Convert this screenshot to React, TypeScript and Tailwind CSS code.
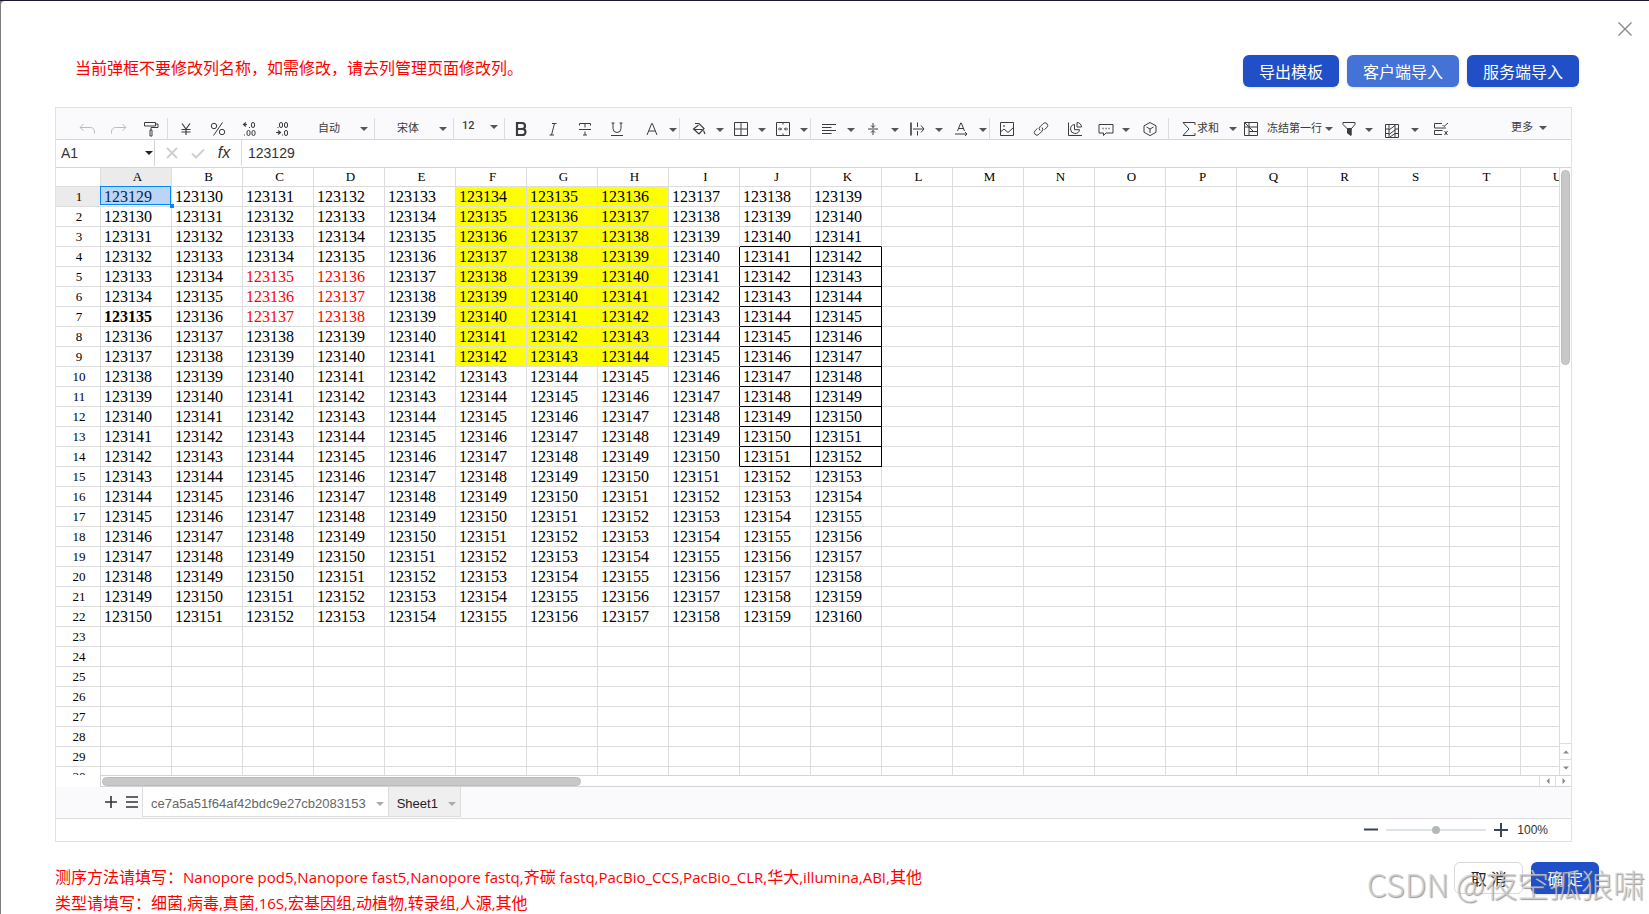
import React from "react";
import clsx from "clsx";

const COLUMNS = "ABCDEFGHIJKLMNOPQRSTUVWXYZ".split("");
const ROWS = Array.from({ length: 30 }, (_, i) => i + 1);
const DATA_ROWS = 22;
const DATA_COLUMNS = 11;

const Icon = ({ children, className = "" }) => (
  <svg
    viewBox="0 0 16 16"
    className={clsx("h-4 w-4 shrink-0", className)}
    fill="none"
    stroke="currentColor"
    strokeWidth="1"
    aria-hidden="true"
  >
    {children}
  </svg>
);

const Arrow = ({ className = "text-[#555]" }) => (
  <svg viewBox="0 0 8 4" className={clsx("h-1 w-2 shrink-0", className)} fill="currentColor" aria-hidden="true">
    <path d="M0 0h8L4 4z" />
  </svg>
);

const Tool = ({ label, children, className = "w-8" }) => (
  <button type="button" aria-label={label} className={clsx("flex h-full items-center justify-center", className)}>
    {children}
  </button>
);

const DropTool = ({ label, children, className = "w-8" }) => (
  <div className="flex h-full">
    <Tool label={label} className={className}>
      {children}
    </Tool>
    <button type="button" aria-label={`${label}选项`} className="flex h-full w-3 items-center justify-center pt-0.5">
      <Arrow />
    </button>
  </div>
);

const Combo = ({ label, className }) => (
  <button type="button" className={clsx("flex h-full items-center justify-between text-[11px]", className)}>
    <span className="whitespace-nowrap">{label}</span>
    <Arrow />
  </button>
);

const Group = ({ children, className = "" }) => (
  <div className={clsx("flex h-full shrink-0 border-r border-[#ddd]", className)}>{children}</div>
);

const Toolbar = () => (
  <div className="flex h-8 overflow-hidden border-b border-[#d4d4d4] bg-[#fafafc] pt-2.5 text-[#3c3c3c]">
    <Group className="pl-[15px]">
      <Tool label="撤销">
        <Icon className="text-[#bbb]">
          <path d="M4.500 3L1 6.500 4.500 9.500M1 6.500h10.500c2.500 0 4 1.800 4 4.500v1.500" />
        </Icon>
      </Tool>
      <Tool label="重做">
        <Icon className="text-[#bbb]">
          <path d="M11.500 3L15 6.500 11.500 9.500M15 6.500H4.500C2 6.500.5 8.300.5 11v1.500" />
        </Icon>
      </Tool>
      <Tool label="格式刷">
        <Icon>
          <path d="M1.500 1.500h11v3.500h-11zM12.500 3h2.500v3.500H8v2.500" />
          <path d="M7 9h2v6H7z" />
        </Icon>
      </Tool>
    </Group>
    <Group className="pl-0.5">
      <Tool label="货币格式">
        <Icon>
          <path d="M4 2.500l4 5.500 4-5.500M8 8v6M3.500 8.500h9M3.500 11h9" strokeWidth="1.200" />
        </Icon>
      </Tool>
      <Tool label="百分比格式">
        <Icon>
          <circle cx="4" cy="5" r="2.700" />
          <circle cx="12" cy="11" r="2.700" />
          <path d="M12.500 1.500l-9 13" />
        </Icon>
      </Tool>
      <Tool label="减少小数位数">
        <Icon>
          <path d="M4 1.500L1.500 3.500 4 5.500M1.500 3.500H5M7 6.500h1M2 14h1" strokeWidth="1.200" />
          <rect x="9.500" y="1.500" width="3" height="5" rx="1.500" />
          <rect x="5" y="9.500" width="3" height="5" rx="1.500" />
          <rect x="10" y="9.500" width="3" height="5" rx="1.500" />
        </Icon>
      </Tool>
      <Tool label="增加小数位数">
        <Icon>
          <path d="M4 9.500l2.500 2-2.500 2M2 11.500h4.500M8 14h1M3.500 6.500h1" strokeWidth="1.200" />
          <rect x="5.500" y="1.500" width="3" height="5" rx="1.500" />
          <rect x="10.500" y="1.500" width="3" height="5" rx="1.500" />
          <rect x="10.500" y="9.500" width="3" height="5" rx="1.500" />
        </Icon>
      </Tool>
      <Combo label="自动" className="ml-5 mr-1.5 w-[50px]" />
    </Group>
    <Group>
      <Combo label="宋体" className="ml-[22px] mr-1.5 w-[50px]" />
    </Group>
    <Group>
      <Combo label="12" className="ml-2 mr-1.5 w-9 pb-1 font-[Roboto] font-medium" />
    </Group>
    <Group>
      <Tool label="加粗">
        <Icon>
          <path d="M4 2h5a2.900 2.900 0 0 1 0 6H4zM4 8h5.500a3 3 0 0 1 0 6H4z" strokeWidth="2.200" />
        </Icon>
      </Tool>
      <Tool label="斜体">
        <Icon>
          <path d="M7 2.500h4.500M4.500 14h4.500M9.500 2.500L6.500 14" />
        </Icon>
      </Tool>
      <Tool label="删除线">
        <Icon>
          <path d="M2.500 4.500v-2h11v2M2 8.500h12M8 2.500v4M8 10.500V14M6 14h4" />
        </Icon>
      </Tool>
      <Tool label="下划线">
        <Icon>
          <path d="M2.500 2h3M10.500 2h3M4 2v5.500a4 4 0 0 0 8 0V2M2 14.500h12" />
        </Icon>
      </Tool>
      <div className="ml-1">
        <DropTool label="文本颜色" className="h-full w-[30px]">
          <Icon>
            <path d="M3 14L7.700 2.500h.6L13 14M4.500 10h7" />
          </Icon>
        </DropTool>
      </div>
    </Group>
    <Group className="pl-1">
      <DropTool label="单元格颜色" className="w-[30px]">
        <Icon>
          <path d="M4 2.500h4l5 5-5 5.500-5.500-5L7.500 4M3 8.500h8M12.500 9.500l1.500 3.500" strokeWidth="1.200" />
        </Icon>
      </DropTool>
      <DropTool label="边框" className="w-[30px]">
        <Icon>
          <path d="M1.500 1.500h13v13h-13zM8 1.500v13M1.500 8h13" />
        </Icon>
      </DropTool>
      <DropTool label="合并单元格" className="w-[30px]">
        <Icon>
          <path d="M1.500 1.500h13v13h-13zM8 1.500v2M8 12.500v2" />
          <path d="M3 8h3.500M5 6.500L6.500 8 5 9.500M13 8H9.500M11 6.500L9.500 8 11 9.500" />
        </Icon>
      </DropTool>
    </Group>
    <Group className="pl-0.5">
      <DropTool label="水平对齐">
        <Icon>
          <path d="M1 3.500h14M1 6.500h9.500M1 9.500h14M1 12.500h9.500" strokeWidth="1.200" />
        </Icon>
      </DropTool>
      <DropTool label="垂直对齐">
        <Icon>
          <path d="M3 8h10M8 2v4.500M6 4.500l2 2 2-2M8 14V9.500M6 11.500l2-2 2 2" />
        </Icon>
      </DropTool>
      <DropTool label="文本换行">
        <Icon>
          <path d="M2 1.500v13" strokeWidth="1.600" />
          <path d="M8.500 1.500v4.500M8.500 10v4.500M4 8h11M12 4.500L15 8l-3 3.500" />
        </Icon>
      </DropTool>
      <DropTool label="文本旋转">
        <Icon>
          <path d="M4.500 10L7.700 2h.6l3.200 8M5.500 7.500h5M2 13h12M12 11l2 2-2 2" />
        </Icon>
      </DropTool>
    </Group>
    <Group>
      <Tool label="插入图片" className="w-[34px]">
        <Icon>
          <path d="M1.500 1.500h13v13h-13zM1.500 11l3.500-3 4 3.500 5.500-5" />
          <circle cx="5" cy="5" r="0.500" />
        </Icon>
      </Tool>
      <Tool label="插入链接" className="w-[34px]">
        <Icon>
          <path d="M7 9.500a2.600 2.600 0 0 1 0-3.700l3.200-3.200a2.600 2.600 0 0 1 3.700 3.700L11.500 8.700" />
          <path d="M9 6.500a2.600 2.600 0 0 1 0 3.700l-3.200 3.200a2.600 2.600 0 0 1-3.700-3.700l2.400-2.400" />
        </Icon>
      </Tool>
      <Tool label="图表" className="w-[34px]">
        <Icon>
          <path d="M1.500 1.500v13H15M7.500 3.500a4.500 4.500 0 1 0 5 5.200h-5zM10 1.500v4.500h4.500A4.500 4.500 0 0 0 10 1.500z" />
        </Icon>
      </Tool>
      <DropTool label="批注" className="w-7">
        <Icon>
          <path d="M1 3.500h14v8.500H8l-2.500 2.500V12H1z" />
          <path d="M4.500 7.500h1M7.500 7.500h1M10.500 7.500h1" strokeWidth="1.300" />
        </Icon>
      </DropTool>
      <Tool label="数据透视表" className="w-9">
        <Icon>
          <path d="M8 1.500l6 3.300v6.500l-6 3.300-6-3.300V4.800zM8 8v4M8 8L4.500 6M8 8l3.500-2" />
        </Icon>
      </Tool>
    </Group>
    <div className="flex h-full shrink-0 pl-3">
      <button type="button" className="flex h-full w-[46px] items-center text-[11px]">
        <Icon>
          <path d="M14 4V1.500H2L8 8l-6 6.500h12V12" />
        </Icon>
        <span className="whitespace-nowrap">求和</span>
      </button>
      <button type="button" aria-label="求和选项" className="w-4 pl-0.5">
        <Arrow />
      </button>
      <button type="button" className="flex h-full w-20 items-center gap-2 text-[11px]">
        <Icon>
          <path d="M1.500 1.500h13v13h-13zM6 1.500v13M1.500 6h13M6 10.500h8.500M1.500 1.500L6 6M6 6l4.500 4.500" />
        </Icon>
        <span className="whitespace-nowrap">冻结第一行</span>
      </button>
      <button type="button" aria-label="冻结选项" className="w-3 pl-0.5">
        <Arrow />
      </button>
      <DropTool label="筛选" className="w-7">
        <Icon>
          <path d="M2 1.500h12v2L10 8v6.500L6.500 12V8L2 3.500z" />
          <path d="M6.500 7.500H10V14L6.500 12z" fill="currentColor" />
        </Icon>
      </DropTool>
      <DropTool label="条件格式" className="w-[34px] pt-1">
        <Icon>
          <path d="M1.500 1.500h13v13h-13zM5 1.500v13M11 1.500v13M1.500 6H5M1.500 10.500H5M11 6h3.500M11 10.500h3.500M5 7l6-4.500M5 11.500L11 7M6 14l5-3.500" />
        </Icon>
      </DropTool>
      <Tool label="数据验证" className="w-10">
        <Icon>
          <path d="M9 2.500H1.500v4.500H13M9.500 9.500h-8v4H9M9.500 4l1.500 1.500L15 2M11.500 10l3 4M14.500 10l-3 4" />
        </Icon>
      </Tool>
    </div>
    <Combo label="更多" className="ml-auto mr-6 w-9 pb-0.5" />
  </div>
);

const FormulaBar = () => (
  <div className="flex h-7 border-b border-[#d4d4d4] pb-px text-sm text-[#333]">
    <div className="flex w-[99px] items-center border-r border-[#d4d4d4] pl-[5px] pr-px">
      <input aria-label="名称框" defaultValue="A1" className="w-full min-w-0 outline-none" />
      <Arrow className="text-[#222]" />
    </div>
    <div className="flex w-[87px] items-center justify-center border-r border-[#ddd]">
      <Tool label="取消输入" className="w-[26px]">
        <Icon className="text-[#d0d0d0]">
          <path d="M3 3l10 10M13 3L3 13" strokeWidth="2" />
        </Icon>
      </Tool>
      <Tool label="确认输入" className="w-[26px]">
        <Icon className="text-[#d0d0d0]">
          <path d="M2 8.500l4 4 8-8" strokeWidth="2" />
        </Icon>
      </Tool>
      <Tool label="插入函数" className="w-[26px]">
        <span className="text-base leading-4 italic">fx</span>
      </Tool>
    </div>
    <input aria-label="编辑栏" defaultValue="123129" className="min-w-0 flex-1 pl-1.5 outline-none" />
  </div>
);

const cellClass = (row, col) => {
  const boxed = row >= 4 && row <= 14 && (col === 9 || col === 10);
  const boxTop = row === 3 && (col === 9 || col === 10);
  const boxLeft = row >= 4 && row <= 14 && col === 8;
  return clsx(
    "relative h-5 min-w-[71px] border-r border-b pl-[3px] text-base leading-[19px]",
    boxed || boxLeft ? "border-r-black" : "border-r-[#ddd]",
    boxed || boxTop ? "border-b-black" : "border-b-[#ddd]",
    row <= 9 && col >= 5 && col <= 7 && "bg-[#ffff00]",
    row >= 5 && row <= 7 && (col === 2 || col === 3) ? "text-[#ff0000]" : "text-black",
    row === 7 && col === 0 && "font-bold"
  );
};

const Grid = () => (
  <div className="h-[607px] min-w-0 flex-1 overflow-hidden">
    <table className="border-separate border-spacing-0 font-['Liberation_Serif',serif]">
      <thead>
        <tr>
          <td className="h-[19px] min-w-[45px] border-r border-b border-[#ddd]" />
          {COLUMNS.map((c, i) => (
            <th
              key={c}
              scope="col"
              className={clsx(
                "h-[19px] min-w-[71px] border-r border-b border-[#ddd] pl-[3px] text-[13px] leading-[18px] font-normal text-black",
                i === 0 && "bg-[#ebebeb]"
              )}
            >
              {c}
            </th>
          ))}
        </tr>
      </thead>
      <tbody>
        {ROWS.map((r) => (
          <tr key={r}>
            <th
              scope="row"
              className={clsx(
                "h-5 border-r border-b border-[#ddd] pl-0.5 text-[13px] leading-[19px] font-normal text-black",
                r === 1 && "bg-[#ebebeb]"
              )}
            >
              {r}
            </th>
            {COLUMNS.map((c, i) => (
              <td key={c} className={cellClass(r, i)}>
                {r <= DATA_ROWS && i < DATA_COLUMNS ? 123127 + r + i + 1 : ""}
                {r === 1 && i === 0 && (
                  <span className="absolute -top-px right-0 bottom-px -left-px z-10 border border-[#0188fb] bg-[#1a73e8]/30">
                    <span className="absolute -right-1 -bottom-1 h-1 w-1 bg-[#0188fb]" />
                  </span>
                )}
              </td>
            ))}
          </tr>
        ))}
      </tbody>
    </table>
  </div>
);

const ScrollArrow = ({ label, d, className }) => (
  <button type="button" aria-label={label} className={clsx("flex items-center justify-center border-[#ddd] text-[#888]", className)}>
    <svg viewBox="0 0 6 6" className="h-1.5 w-1.5" fill="currentColor" aria-hidden="true">
      <path d={d} />
    </svg>
  </button>
);

const Scrollbars = () => (
  <div className="flex h-3 pl-11">
    <div className="flex flex-1 border-t border-b border-l border-[#d4d4d4]">
      <div className="flex flex-1 items-center pl-px">
        <div className="h-[9px] w-1/3 rounded-full border border-[#bbb] bg-[#c8c8c8]" />
      </div>
      <ScrollArrow label="向左滚动" d="M4.500 0v6L1.500 3z" className="w-4 border-l" />
      <ScrollArrow label="向右滚动" d="M1.500 0v6l3-3z" className="w-4 border-l" />
    </div>
  </div>
);

const SheetTabs = () => (
  <div className="flex h-8 border-b border-[#ddd] bg-[#fafafc] pb-px pl-11 text-[13px]">
    <button type="button" aria-label="新增工作表" className="flex w-[21px] items-center justify-center text-[#333]">
      <Icon>
        <path d="M8 2v12M2 8h12" strokeWidth="1.600" />
      </Icon>
    </button>
    <button type="button" aria-label="工作表列表" className="flex w-[21px] items-center justify-center text-[#333]">
      <Icon>
        <path d="M2 3h12M2 8h12M2 13h12" strokeWidth="1.600" />
      </Icon>
    </button>
    <button type="button" className="flex items-center gap-2.5 border border-t-0 border-[#ddd] bg-white pt-1 pr-1 pl-2 text-[#666]">
      ce7a5a51f64af42bdc9e27cb2083153
      <Arrow className="text-[#aaa]" />
    </button>
    <button type="button" className="flex items-center gap-2.5 border border-t-0 border-l-0 border-[#ddd] bg-[#efefef] pt-1 pr-1 pl-2 text-[#222]">
      Sheet1
      <Arrow className="text-[#aaa]" />
    </button>
  </div>
);

const StatusBar = () => (
  <div className="flex h-[22px] items-center justify-end pr-[23px] text-xs text-[#3b4552]">
    <button type="button" aria-label="缩小">
      <Icon>
        <path d="M1 7.500h14" strokeWidth="2" />
      </Icon>
    </button>
    <input
      type="range"
      aria-label="缩放"
      min="0"
      max="100"
      defaultValue="50"
      className="mx-[7px] h-0.5 w-[100px] appearance-none bg-[#dfe4e9] [&::-webkit-slider-thumb]:h-2 [&::-webkit-slider-thumb]:w-2 [&::-webkit-slider-thumb]:appearance-none [&::-webkit-slider-thumb]:rounded-full [&::-webkit-slider-thumb]:bg-[#b2bab8]"
    />
    <button type="button" aria-label="放大">
      <Icon>
        <path d="M1 8h14M8 1v14" strokeWidth="2" />
      </Icon>
    </button>
    <span className="ml-2 text-[#333]">100%</span>
  </div>
);

const Spreadsheet = () => (
  <div className="mr-[77px] ml-[54px] border border-[#e2e2e2] bg-white font-['Liberation_Sans','Noto_Sans_CJK_SC',sans-serif]">
    <Toolbar />
    <FormulaBar />
    <div className="flex">
      <Grid />
      <div className="flex w-3 flex-col border-l border-[#ddd]">
        <div className="flex-1 px-px pt-0.5">
          <div className="h-[195px] w-[9px] rounded-full border border-[#bbb] bg-[#c8c8c8]" />
        </div>
        <ScrollArrow label="向上滚动" d="M0 4.500h6L3 1.500z" className="h-4 border-t" />
        <ScrollArrow label="向下滚动" d="M0 1.500h6l-3 3z" className="h-4 border-t" />
      </div>
    </div>
    <Scrollbars />
    <SheetTabs />
    <StatusBar />
  </div>
);

const En = ({ children }) => <span className="font-['Open_Sans',sans-serif] text-[15px]">{children}</span>;

const ImportButton = ({ children, className = "bg-[#204fc8]" }) => (
  <button type="button" className={clsx("h-8 rounded-md px-4 text-base leading-8 text-white shadow-sm", className)}>
    {children}
  </button>
);

export default function App() {
  return (
    <div
      lang="zh-CN"
      className="relative h-screen overflow-hidden border-t border-[#1a1932] bg-[#7f7f7f] pl-px font-['Noto_Sans_CJK_SC',sans-serif]"
    >
      <div className="relative h-full rounded-tl bg-white pt-[51px]">
        <button type="button" aria-label="关闭" className="absolute top-5 right-4 text-[#888]">
          <Icon>
            <path d="M1.500 1.500l13 13M14.500 1.500l-13 13" strokeWidth="1.400" />
          </Icon>
        </button>
        <div className="flex items-start justify-between pr-[70px] pb-5 pl-[74px]">
          <p className="text-base leading-[30px] text-[#ff0000]">当前弹框不要修改列名称，如需修改，请去列管理页面修改列。</p>
          <div className="flex gap-2 pt-[3px]">
            <ImportButton>导出模板</ImportButton>
            <ImportButton className="bg-[#4472d6]">客户端导入</ImportButton>
            <ImportButton>服务端导入</ImportButton>
          </div>
        </div>
        <Spreadsheet />
        <div className="flex items-start justify-between pt-5 pr-[50px] pl-[54px]">
          <div className="pt-0.5 text-base leading-[25px] text-[#ff0000]">
            <p>
              测序方法请填写：<En>Nanopore pod5,Nanopore fast5,Nanopore fastq,</En>齐碳<En> fastq,PacBio_CCS,PacBio_CLR,</En>
              华大<En>,illumina,ABI,</En>其他
            </p>
            <p>
              类型请填写：细菌<En>,</En>病毒<En>,</En>真菌<En>,16S,</En>宏基因组<En>,</En>动植物<En>,</En>转录组<En>,</En>人源
              <En>,</En>其他
            </p>
          </div>
          <div className="flex gap-2">
            <button type="button" className="h-8 rounded-md border border-[#d9d9d9] px-4 text-base leading-7 text-[#222]">
              取 消
            </button>
            <ImportButton>确 定</ImportButton>
          </div>
        </div>
      </div>
      <div className="pointer-events-none absolute right-1 bottom-2 text-[32px] leading-[46px] font-light whitespace-nowrap text-[#d2d2d2]/80 [text-shadow:1px_1px_1px_rgba(110,110,110,0.7)]">
        CSDN @夜空孤狼啸
      </div>
    </div>
  );
}
